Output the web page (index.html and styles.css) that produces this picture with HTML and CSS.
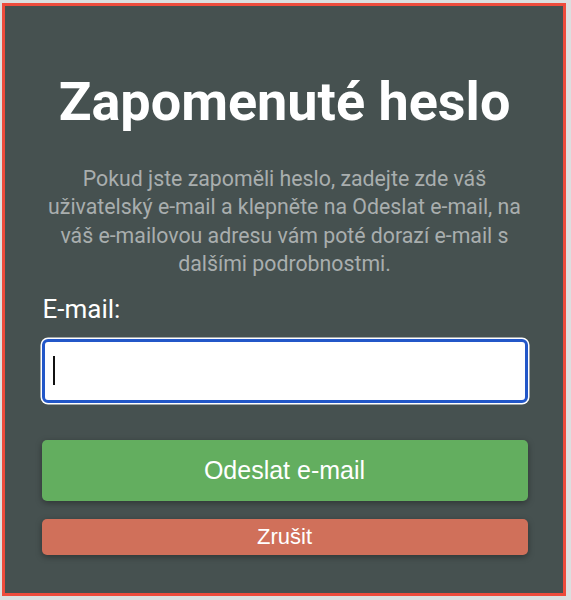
FILE: index.html
```html
<!DOCTYPE html>
<html lang="cs">
<head>
<meta charset="utf-8">
<title>Zapomenuté heslo</title>
<link rel="stylesheet" href="styles.css">
</head>
<body>
  <main class="panel">
    <h1 class="title">Zapomenuté heslo</h1>
    <p class="intro">Pokud jste zapoměli heslo, zadejte zde váš uživatelský e-mail a klepněte na Odeslat e-mail, na váš e-mailovou adresu vám poté dorazí e-mail s dalšími podrobnostmi.</p>
    <form class="form">
      <label class="label" for="email">E-mail:</label>
      <div class="field">
        <input class="input" id="email" type="email" name="email">
      </div>
      <button class="btn btn-send" type="submit">Odeslat e-mail</button>
      <button class="btn btn-cancel" type="button">Zrušit</button>
    </form>
  </main>
</body>
</html>
```

FILE: styles.css
```css
html, body {
  margin: 0;
  padding: 0;
}

body {
  background: #dcdfdf;
  padding: 3px 5px 4px 2px;
  height: 600px;
  box-sizing: border-box;
}

.panel {
  box-sizing: border-box;
  height: 593px;
  border: 3px solid #ee4c3c;
  background: #465150;
  padding: 65px 35.5px 0 36.5px;
  display: flex;
  flex-direction: column;
  font-family: Roboto, "Noto Sans", sans-serif;
}

.title {
  margin: 0;
  color: #ffffff;
  font-size: 54px;
  font-weight: 700;
  text-align: center;
  line-height: 61px;
}

.intro {
  margin: 33px 0 0;
  color: #a9aeae;
  font-size: 21.3px;
  line-height: 28.3px;
  text-align: center;
}

.form {
  display: flex;
  flex-direction: column;
  margin-top: 17px;
}

.label {
  color: #ffffff;
  font-size: 26px;
  line-height: 28px;
  padding-left: 1px;
}

.field {
  position: relative;
  margin-top: 16px;
}

.field::after {
  content: "";
  position: absolute;
  left: 11px;
  top: 17px;
  width: 2px;
  height: 29px;
  background: #111;
}

.input {
  box-sizing: border-box;
  display: block;
  width: 100%;
  height: 64px;
  margin: 0;
  border: 3px solid #2357c8;
  border-radius: 6px;
  background: #ffffff;
  box-shadow: 0 0 0 1.5px #ffffff;
  outline: none;
  caret-color: transparent;
  font-size: 24px;
  padding: 0 10px;
}

.btn {
  box-sizing: border-box;
  display: block;
  width: 100%;
  margin: 0;
  border: none;
  border-radius: 5px;
  color: #ffffff;
  font-family: "Liberation Sans", Arial, sans-serif;
  box-shadow: 0 2px 6px rgba(0, 0, 0, 0.35);
  cursor: pointer;
}

.btn-send {
  margin-top: 37px;
  height: 61px;
  background: #63ae5f;
  font-size: 25px;
}

.btn-cancel {
  margin-top: 18px;
  height: 36px;
  background: #d0705a;
  font-size: 22px;
}
```
